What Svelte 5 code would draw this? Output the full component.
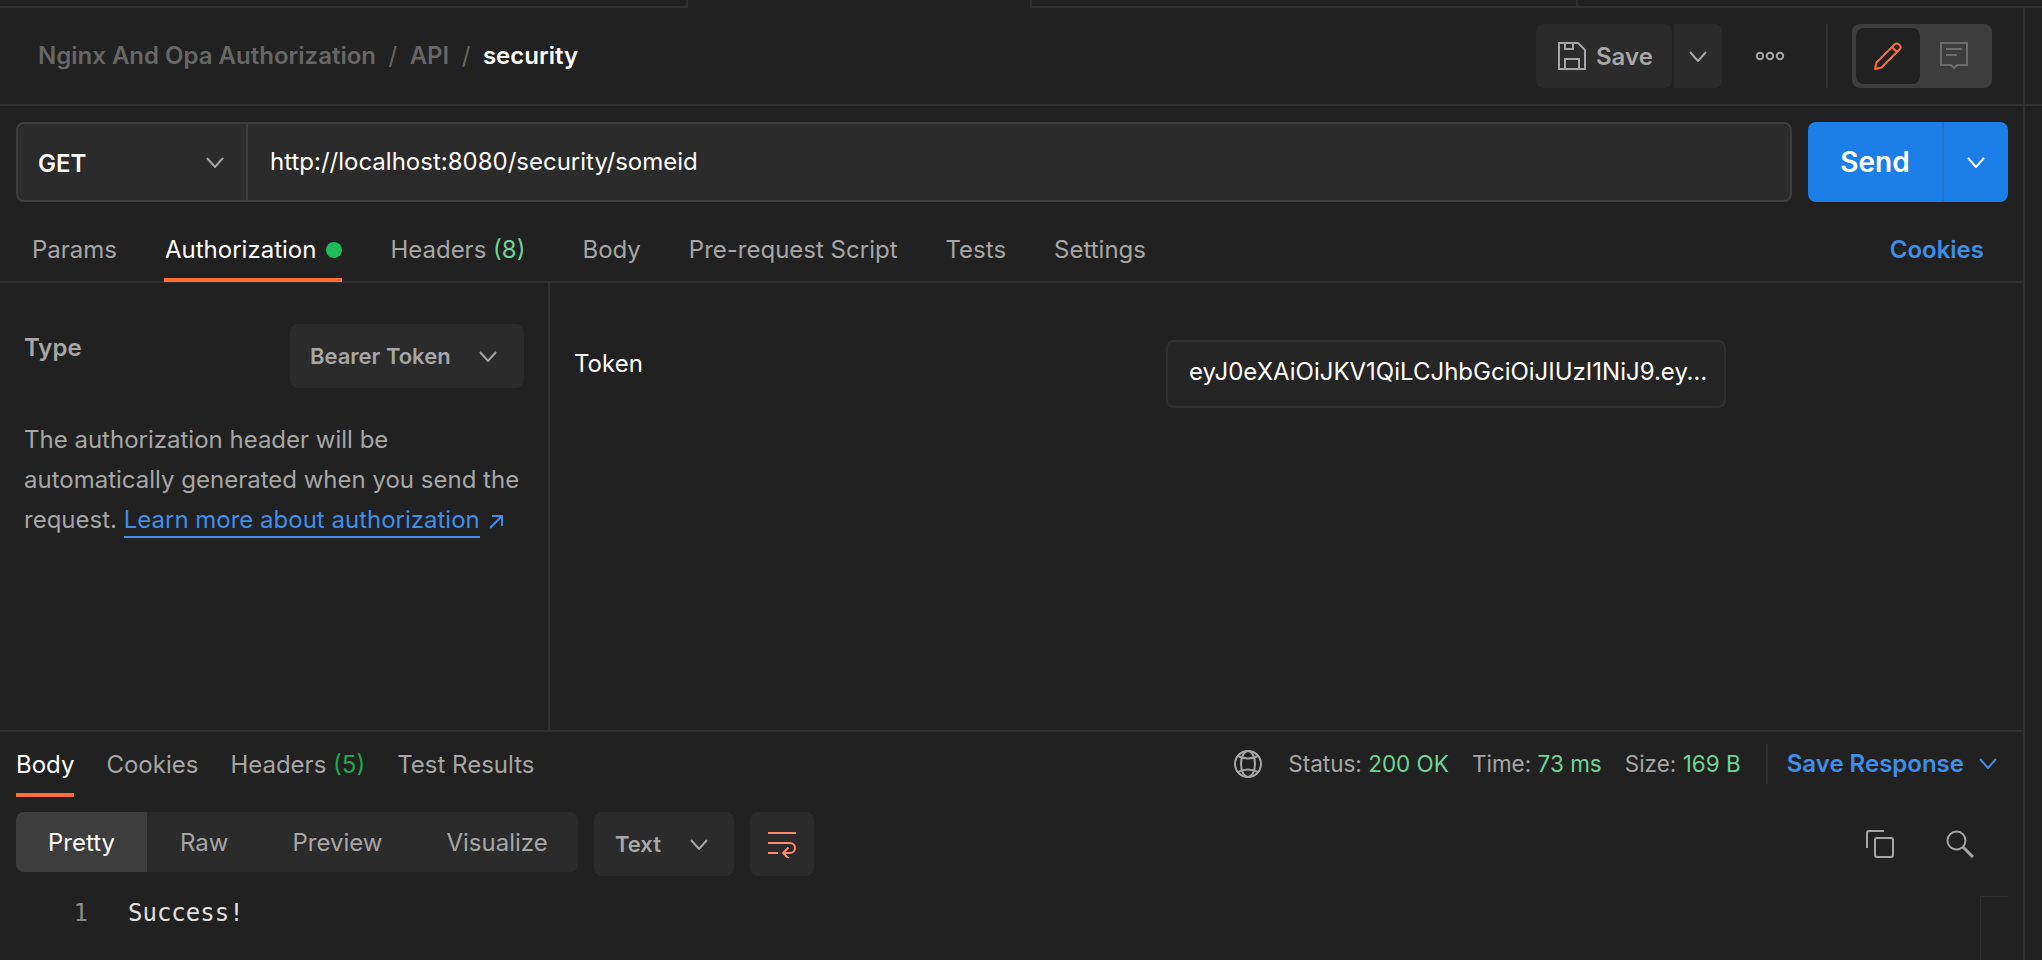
<script>
  const reqTabs = ['Pre-request Script', 'Tests', 'Settings'];
  const token = 'eyJ0eXAiOiJKV1QiLCJhbGciOiJIUzI1NiJ9.eyJzdWIiOiIxMjM0NTY3ODkwIiwibmFtZSI6IkpvaG4gRG9lIn0';
</script>

<div class="app">
  <div class="tabstrip">
    <div class="strip s1"></div>
    <div class="strip s2"></div>
    <div class="strip s3"></div>
    <div class="strip s4"></div>
  </div>

  <header class="head">
    <div class="crumbs">
      <span>Nginx And Opa Authorization</span><i>/</i><span>API</span><i>/</i><b>security</b>
    </div>
    <div class="actions">
      <button class="save">
        <svg width="28" height="28" viewBox="0 0 28 28" fill="none" stroke="currentColor" stroke-width="2"><path d="M1 1H20L27 8V27H1Z"/><path d="M7 1V7H15V1"/><path d="M7 27V17H21V27"/></svg>
        Save
      </button>
      <button class="savecaret">
        <svg width="18" height="11" viewBox="0 0 18 11" fill="none" stroke="currentColor" stroke-width="2"><path d="M1 1L9 10L17 1"/></svg>
      </button>
      <div class="dots">
        <svg width="30" height="10" viewBox="0 0 30 10" fill="none" stroke="currentColor" stroke-width="2"><circle cx="5" cy="5" r="3.2"/><circle cx="15" cy="5" r="3.2"/><circle cx="25" cy="5" r="3.2"/></svg>
      </div>
      <div class="vsep"></div>
      <div class="toggle">
        <div class="on">
          <svg width="28" height="28" viewBox="0 0 28 28" fill="none" stroke="#ff6c37" stroke-width="2" stroke-linejoin="round"><path d="M1 27L2.500 20.500L20.500 2.500Q22.500 .5 25 2.500L26 3.500Q27.500 5.500 25.500 7.500L7.500 25.500Z"/><path d="M18 5L23 10"/></svg>
        </div>
        <div class="off">
          <svg width="28" height="28" viewBox="0 0 28 28" fill="none" stroke="#6b6b6b" stroke-width="2"><path d="M1 1H27V23H17L14 26L11 23H1Z"/><path d="M6 7H22M6 13H17"/></svg>
        </div>
      </div>
    </div>
  </header>

  <div class="urlrow">
    <div class="urlbox">
      <div class="method">
        <span class="get">GET</span>
        <svg width="18" height="11" viewBox="0 0 18 11" fill="none" stroke="#a6a6a6" stroke-width="2"><path d="M1 1L9 10L17 1"/></svg>
      </div>
      <div class="url">http://localhost:8080/security/someid</div>
    </div>
    <div class="send">
      <span class="sendl">Send</span>
      <span class="sendr">
        <svg width="18" height="11" viewBox="0 0 18 11" fill="none" stroke="#fff" stroke-width="2"><path d="M1 1L9 10L17 1"/></svg>
      </span>
    </div>
  </div>

  <nav class="reqtabs">
    <span class="tab">Params</span>
    <span class="tab active">Authorization<em class="dot"></em></span>
    <span class="tab hdr">Headers <span class="count">(8)</span></span>
    <span class="tab">Body</span>
    {#each reqTabs as t}
      <span class="tab">{t}</span>
    {/each}
    <span class="cookies">Cookies</span>
  </nav>

  <section class="auth">
    <aside class="left">
      <div class="typerow">
        <span class="type">Type</span>
        <div class="select">
          Bearer Token
          <svg width="18" height="11" viewBox="0 0 18 11" fill="none" stroke="#a6a6a6" stroke-width="2"><path d="M1 1L9 10L17 1"/></svg>
        </div>
      </div>
      <p class="desc">The authorization header will be automatically generated when you send the request. <a href="#top">Learn more about authorization</a><svg class="ext" width="14" height="14" viewBox="0 0 14 14" fill="none" stroke="#3d8fe8" stroke-width="2"><path d="M1 13L13 1M3 1H13V11"/></svg></p>
    </aside>
    <div class="right">
      <span class="toklabel">Token</span>
      <div class="tokbox"><span>{token}</span></div>
    </div>
  </section>

  <section class="resp">
    <div class="resphead">
      <div class="resptabs">
        <span class="rtab active">Body</span>
        <span class="rtab">Cookies</span>
        <span class="rtab">Headers <span class="count5">(5)</span></span>
        <span class="rtab">Test Results</span>
      </div>
      <div class="meta">
        <svg class="globe" width="28" height="28" viewBox="0 0 28 28" fill="none" stroke="#a6a6a6" stroke-width="2"><circle cx="14" cy="14" r="13"/><ellipse cx="14" cy="14" rx="7" ry="13"/><path d="M4 6Q14 11 24 6M4 22Q14 17 24 22"/></svg>
        <span class="m">Status: <b>200 OK</b></span>
        <span class="m">Time: <b>73 ms</b></span>
        <span class="m">Size: <b>169 B</b></span>
        <span class="msep"></span>
        <span class="saveresp">Save Response</span>
        <svg width="18" height="11" viewBox="0 0 18 11" fill="none" stroke="#3d8fe8" stroke-width="2"><path d="M1 1L9 10L17 1"/></svg>
      </div>
    </div>

    <div class="toolbar">
      <div class="seg">
        <span class="sel">Pretty</span>
        <span>Raw</span>
        <span>Preview</span>
        <span>Visualize</span>
      </div>
      <div class="fmt">
        Text
        <svg width="18" height="11" viewBox="0 0 18 11" fill="none" stroke="#a6a6a6" stroke-width="2"><path d="M1 1L9 10L17 1"/></svg>
      </div>
      <div class="wrap">
        <svg width="28" height="28" viewBox="0 0 28 28" fill="none" stroke="#ff8a65" stroke-width="2"><path d="M0 3H28M0 13H22A5 5 0 0 1 22 23H15M20.500 17.500L15 23L20.500 28.500M0 23H10"/></svg>
      </div>
      <div class="tools">
        <svg width="28" height="28" viewBox="0 0 28 28" fill="none" stroke="#a6a6a6" stroke-width="2"><path d="M18 1H3Q1 1 1 3V18"/><rect x="9" y="8" width="18" height="19" rx="2"/></svg>
        <svg width="28" height="28" viewBox="0 0 28 28" fill="none" stroke="#a6a6a6"><circle cx="10.500" cy="10.500" r="9" stroke-width="2"/><path d="M17 17L27 27" stroke-width="3"/></svg>
      </div>
    </div>

    <div class="code">
      <span class="ln">1</span>
      <span class="src">Success!</span>
      <div class="mini"></div>
    </div>
  </section>
</div>

<style>
  :global(body) { margin: 0; background: #212121; overflow: hidden; }
  * { box-sizing: border-box; }
  .app {
    width: 2042px; height: 960px; background: #212121; color: #a6a6a6;
    font-family: Inter, "Liberation Sans", sans-serif; font-size: 24px;
    display: flex; flex-direction: column; overflow: hidden; position: relative;
  }
  .app::after { content: ""; position: absolute; left: 2023px; top: 7px; bottom: 0; width: 2px; background: #303030; }
  button { font: inherit; border: 0; color: inherit; }

  .tabstrip { height: 8px; display: flex; flex: none; }
  .strip { height: 8px; border-bottom: 2px solid #303030; }
  .s1 { width: 688px; border-right: 2px solid #303030; }
  .s2 { width: 342px; border-bottom-color: transparent; }
  .s3 { width: 548px; border-left: 2px solid #303030; border-right: 2px solid #303030; }
  .s4 { flex: 1; }

  .head {
    height: 98px; flex: none; border-bottom: 2px solid #303030;
    display: flex; align-items: center; justify-content: space-between;
    padding: 0 50px 0 38px; width: 2042px;
  }
  .crumbs { font-weight: 600; color: #666; display: flex; align-items: center; padding-bottom: 2px; }
  .crumbs i { font-style: normal; font-weight: 400; margin: 0 12.5px; }
  .crumbs b { color: #fff; font-weight: 600; }
  .actions { display: flex; align-items: center; height: 64px; }
  .save {
    width: 136px; height: 64px; background: #2b2b2b; border-radius: 8px;
    display: flex; align-items: center; gap: 10px; padding: 0 0 0 22px; font-weight: 600;
  }
  .savecaret {
    width: 48px; height: 64px; margin-left: 2px; background: #2b2b2b; border-radius: 0 8px 8px 0;
    display: flex; align-items: center; justify-content: center; padding: 0;
  }
  .dots { width: 30px; margin-left: 33px; display: flex; align-items: center; }
  .vsep { width: 2px; height: 64px; background: #303030; margin: 0 24px 0 41px; }
  .toggle { width: 140px; height: 64px; background: #3d3d3d; border-radius: 8px; padding: 4px; display: flex; }
  .on { width: 64px; height: 56px; background: #212121; border-radius: 8px; display: flex; align-items: center; justify-content: center; }
  .off { width: 68px; display: flex; align-items: center; justify-content: center; }

  .urlrow { display: flex; padding: 16px 0 0 16px; height: 96px; flex: none; gap: 16px; }
  .urlbox {
    width: 1776px; height: 80px; background: #2b2b2b; border: 2px solid #3d3d3d; border-radius: 8px;
    display: flex; align-items: stretch; color: #fff;
  }
  .method {
    width: 230px; border-right: 2px solid #3d3d3d; display: flex; align-items: center;
    justify-content: space-between; padding: 0 22px 0 20px; font-weight: 600;
  }
  .get { padding-top: 2px; }
  .url { padding-left: 22px; display: flex; align-items: center; padding-bottom: 2px; }
  .send { width: 200px; height: 80px; background: #1c7fe9; border-radius: 8px; display: flex; color: #fff; font-weight: 600; font-size: 28px; }
  .sendl { width: 136px; display: flex; align-items: center; justify-content: center; border-right: 2px solid #1a73d2; }
  .sendr { flex: 1; display: flex; align-items: center; justify-content: center; }

  .reqtabs {
    height: 81px; flex: none; border-bottom: 2px solid #303030; display: flex; gap: 48px;
    padding: 0 39px 0 32px; align-items: stretch; position: relative; width: 2023px;
  }
  .tab { display: flex; align-items: center; white-space: pre; padding-top: 16px; position: relative; }
  .tab.active { color: #fff; }
  .tab.active::after { content: ""; position: absolute; left: -1px; right: 0; bottom: -1px; height: 4px; background: #ff6c37; }
  .hdr { margin-right: 9px; }
  .dot { width: 16px; height: 16px; border-radius: 50%; background: #1fbb58; margin-left: 10px; }
  .count { color: #6bd598; }
  .cookies { margin-left: auto; align-self: center; color: #3d8fe8; font-weight: 600; padding-top: 16px; }

  .auth { height: 449px; flex: none; display: flex; border-bottom: 2px solid #303030; width: 2023px; }
  .left { width: 550px; flex: none; border-right: 2px solid #303030; padding: 41px 24px 0; }
  .typerow { display: flex; justify-content: space-between; height: 64px; }
  .type { font-weight: 600; margin-top: 9px; }
  .select {
    width: 234px; height: 64px; background: #2b2b2b; border-radius: 8px; display: flex; align-items: center;
    justify-content: space-between; padding: 0 27px 0 20px; font-weight: 600; font-size: 22px; white-space: nowrap;
  }
  .desc { margin: 32px 0 0; line-height: 40px; }
  .desc a { color: #3d8fe8; text-decoration: none; border-bottom: 2px solid #3d8fe8; padding-bottom: 2px; }
  .ext { margin-left: 9px; vertical-align: -1px; }
  .right { flex: 1; display: flex; padding: 56px 0 0 24px; }
  .toklabel { color: #fff; width: 592px; margin-top: 10px; }
  .tokbox {
    width: 560px; height: 68px; margin-top: 1px; background: #252525; border: 2px solid #303030; border-radius: 8px; color: #fff;
    display: flex; align-items: center; padding: 0 13px 6px 21px;
  }
  .tokbox span { overflow: hidden; text-overflow: ellipsis; white-space: nowrap; }

  .resp { flex: 1; width: 2023px; padding: 0 0 0 16px; }
  .resphead { display: flex; justify-content: space-between; height: 65px; }
  .resptabs { display: flex; gap: 32px; }
  .rtab { display: flex; align-items: center; white-space: pre; position: relative; }
  .rtab.active { color: #fff; }
  .rtab.active::after { content: ""; position: absolute; left: 0; right: 0; top: 61px; height: 4px; background: #ff6c37; }
  .count5 { color: #1fa651; }
  .meta { display: flex; align-items: center; padding: 0 26px 2px 0; font-size: 22.5px; }
  .globe { margin-right: 26px; }
  .m { margin-right: 23px; white-space: pre; }
  .m b { font-weight: 400; color: #6bd598; }
  .msep { width: 2px; height: 40px; background: #303030; margin: 0 19px 0 2px; }
  .saveresp { color: #3d8fe8; font-weight: 600; font-size: 24px; margin-right: 15px; }

  .toolbar { display: flex; align-items: flex-start; margin-top: 15px; height: 64px; }
  .seg { width: 562px; height: 60px; background: #2b2b2b; border-radius: 8px; display: flex; overflow: hidden; align-items: stretch; }
  .seg span { display: flex; align-items: center; padding: 0 32px; }
  .seg .sel { background: #3d3d3d; color: #fff; width: 132px; margin-right: 1px; }
  .fmt {
    width: 140px; height: 64px; margin-left: 16px; background: #2b2b2b; border-radius: 8px; display: flex; align-items: center;
    justify-content: space-between; padding: 0 26px 0 21px; font-weight: 600; font-size: 22px;
  }
  .wrap { width: 64px; height: 64px; margin-left: 16px; background: #2b2b2b; border-radius: 8px; display: flex; align-items: center; justify-content: center; }
  .tools { margin-left: auto; display: flex; gap: 52px; padding-right: 49px; padding-top: 18px; }

  .code { position: relative; display: flex; height: 80px; margin-top: 21px; font-family: "DejaVu Sans Mono", "Liberation Mono", monospace; }
  .ln { width: 72px; color: #8a8a8a; text-align: right; flex: none; line-height: 32px; }
  .src { margin-left: 40px; color: #e0e0e0; line-height: 32px; }
  .mini { position: absolute; left: 1964px; top: -1px; width: 28px; height: 80px; border-left: 1px solid #303030; border-top: 1px solid #303030; }
</style>
